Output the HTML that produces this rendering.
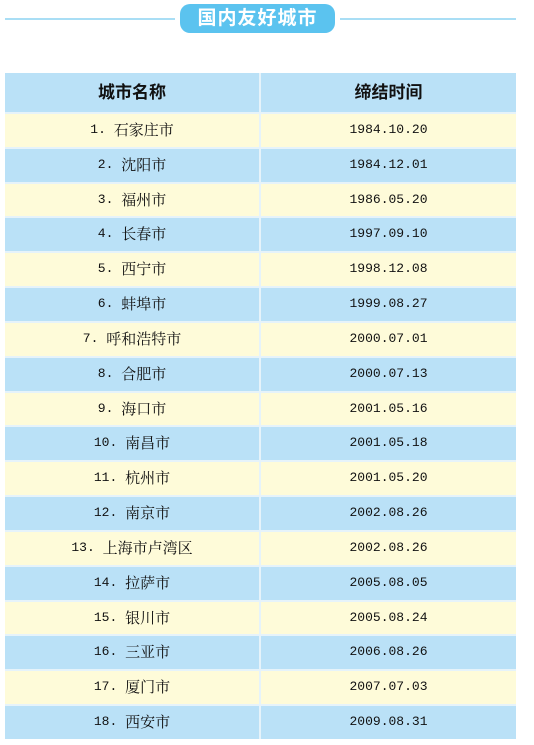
<!DOCTYPE html>
<html><head><meta charset="utf-8"><style>
body{margin:0;width:534px;height:745px;background:#fff;position:relative;overflow:hidden;font-family:"Liberation Mono","Noto Serif CJK SC",serif;}
.line{position:absolute;top:18px;height:2px;background:#a9def5;}
.pill{position:absolute;left:180px;top:4px;width:155px;height:29px;border-radius:10px;background:#5bc3ef;color:#fff;font:bold 19px "Liberation Sans","Noto Sans CJK SC",sans-serif;text-align:center;line-height:29px;letter-spacing:1px;}
.tbl{position:absolute;left:5px;top:73px;width:511px;}
.r{display:flex;height:34.83px;box-sizing:border-box;border-top:2px solid #e6f3fa;}
.r div{box-sizing:border-box;text-align:center;font-size:13px;color:#111;line-height:32px;white-space:nowrap;}
.r div:first-child{width:256px;border-right:2px solid #e6f3fa;}
.r div:last-child{flex:1;}
.r span{font-size:15px;font-family:"Noto Serif CJK SC",serif;vertical-align:top;}
.h{height:39px;border-top:none;background:#bae1f7;}
.h div{font:bold 17px "Liberation Sans","Noto Sans CJK SC",sans-serif !important;line-height:39px !important;}
.y{background:#fefbd9;}
.b{background:#bae1f7;}
</style></head><body>
<div class="line" style="left:5px;width:170px"></div>
<div class="line" style="left:340px;width:176px"></div>
<div class="pill">国内友好城市</div>
<div class="tbl">
<div class="r h"><div>城市名称</div><div>缔结时间</div></div>
<div class="r y"><div>1. <span>石家庄市</span></div><div>1984.10.20</div></div>
<div class="r b"><div>2. <span>沈阳市</span></div><div>1984.12.01</div></div>
<div class="r y"><div>3. <span>福州市</span></div><div>1986.05.20</div></div>
<div class="r b"><div>4. <span>长春市</span></div><div>1997.09.10</div></div>
<div class="r y"><div>5. <span>西宁市</span></div><div>1998.12.08</div></div>
<div class="r b"><div>6. <span>蚌埠市</span></div><div>1999.08.27</div></div>
<div class="r y"><div>7. <span>呼和浩特市</span></div><div>2000.07.01</div></div>
<div class="r b"><div>8. <span>合肥市</span></div><div>2000.07.13</div></div>
<div class="r y"><div>9. <span>海口市</span></div><div>2001.05.16</div></div>
<div class="r b"><div>10. <span>南昌市</span></div><div>2001.05.18</div></div>
<div class="r y"><div>11. <span>杭州市</span></div><div>2001.05.20</div></div>
<div class="r b"><div>12. <span>南京市</span></div><div>2002.08.26</div></div>
<div class="r y"><div>13. <span>上海市卢湾区</span></div><div>2002.08.26</div></div>
<div class="r b"><div>14. <span>拉萨市</span></div><div>2005.08.05</div></div>
<div class="r y"><div>15. <span>银川市</span></div><div>2005.08.24</div></div>
<div class="r b"><div>16. <span>三亚市</span></div><div>2006.08.26</div></div>
<div class="r y"><div>17. <span>厦门市</span></div><div>2007.07.03</div></div>
<div class="r b"><div>18. <span>西安市</span></div><div>2009.08.31</div></div>
</div>
</body></html>
